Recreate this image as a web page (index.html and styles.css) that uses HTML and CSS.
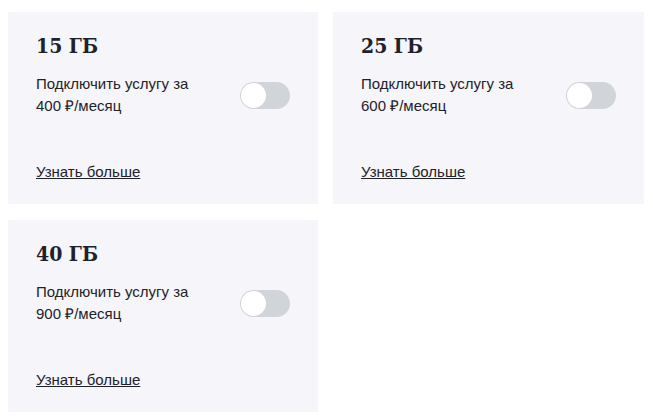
FILE: index.html
```html
<!DOCTYPE html>
<html lang="ru">
<head>
  <meta charset="UTF-8">
  <title>Пакеты интернета</title>
  <link rel="stylesheet" href="styles.css">
</head>
<body>
  <div class="packages">
    <div class="package-card">
      <h3 class="package-title">15 ГБ</h3>
      <div class="package-row">
        <p class="package-text">Подключить услугу за<br>400 ₽/месяц</p>
        <label class="switch">
          <input type="checkbox">
          <span class="switch-track"></span>
        </label>
      </div>
      <a href="#" class="package-link">Узнать больше</a>
    </div>

    <div class="package-card">
      <h3 class="package-title">25 ГБ</h3>
      <div class="package-row">
        <p class="package-text">Подключить услугу за<br>600 ₽/месяц</p>
        <label class="switch">
          <input type="checkbox">
          <span class="switch-track"></span>
        </label>
      </div>
      <a href="#" class="package-link">Узнать больше</a>
    </div>

    <div class="package-card">
      <h3 class="package-title">40 ГБ</h3>
      <div class="package-row">
        <p class="package-text">Подключить услугу за<br>900 ₽/месяц</p>
        <label class="switch">
          <input type="checkbox">
          <span class="switch-track"></span>
        </label>
      </div>
      <a href="#" class="package-link">Узнать больше</a>
    </div>
  </div>
</body>
</html>
```

FILE: styles.css
```css
body {
  margin: 0;
  padding: 12px 9px 8px 8px;
  background-color: #fff;
  font-family: "Liberation Sans", Arial, sans-serif;
  color: #1f2229;
}

.packages {
  display: grid;
  grid-template-columns: 310px 311px;
  column-gap: 15px;
  row-gap: 16px;
}

.package-card {
  background-color: #f5f5fa;
  height: 192px;
  box-sizing: border-box;
  padding: 20px 28px 22px 28px;
  display: flex;
  flex-direction: column;
}

.package-title {
  margin: 0;
  font-family: "DejaVu Serif Condensed", "Liberation Serif", serif;
  font-weight: bold;
  font-size: 21px;
  line-height: 28px;
}

.package-row {
  display: flex;
  justify-content: space-between;
  align-items: center;
  margin-top: 13px;
}

.package-text {
  margin: 0;
  font-size: 15px;
  line-height: 22px;
}

/* переключатель */
.switch {
  position: relative;
  width: 50px;
  height: 27px;
  flex-shrink: 0;
}

.switch input {
  display: none;
}

.switch-track {
  position: absolute;
  inset: 0;
  background-color: #d1d5d9;
  border-radius: 14px;
  cursor: pointer;
}

.switch-track::before {
  content: "";
  position: absolute;
  left: 1px;
  top: 1px;
  width: 25px;
  height: 25px;
  border-radius: 50%;
  background-color: #fff;
}

.package-link {
  margin-top: auto;
  font-size: 15px;
  line-height: 20px;
  color: #1f2229;
  text-decoration: underline;
  align-self: flex-start;
}
```
